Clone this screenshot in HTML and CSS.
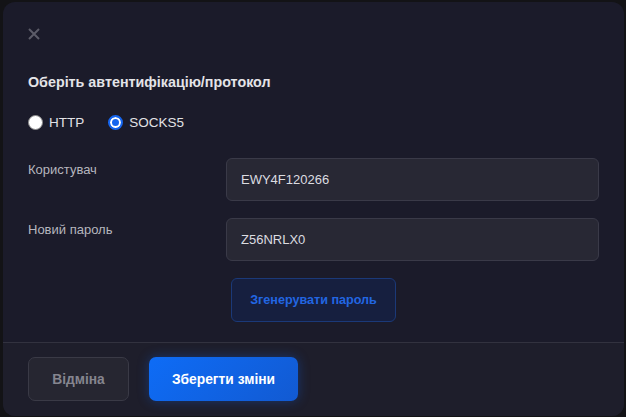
FILE: index.html
```html
<!DOCTYPE html>
<html lang="uk">
<head>
<meta charset="utf-8">
<title>Проксі</title>
<link rel="stylesheet" href="styles.css">
</head>
<body>
<div class="modal">
  <div class="body">
    <button class="close" aria-label="Закрити">
      <svg width="12" height="12" viewBox="0 0 12 12"><path d="M1 1 L11 11 M11 1 L1 11" stroke="#5c5c68" stroke-width="2" stroke-linecap="butt"/></svg>
    </button>
    <h2 class="title">Оберіть автентифікацію/протокол</h2>
    <div class="radios">
      <label class="radio"><input type="radio" name="proto"> <span>HTTP</span></label>
      <label class="radio"><input type="radio" name="proto" checked> <span>SOCKS5</span></label>
    </div>
    <div class="form">
      <div class="label">Користувач</div>
      <input class="field" type="text" value="EWY4F120266">
      <div class="label">Новий пароль</div>
      <input class="field" type="text" value="Z56NRLX0">
      <div></div>
      <div><button class="gen">Згенерувати пароль</button></div>
    </div>
  </div>
  <div class="footer">
    <button class="cancel">Відміна</button>
    <button class="save">Зберегти зміни</button>
  </div>
</div>
</body>
</html>
```
FILE: styles.css
```css
* { box-sizing: border-box; }
html, body { margin: 0; padding: 0; }
body {
  background: #131316;
  font-family: "Liberation Sans", Arial, sans-serif;
  width: 626px;
  height: 417px;
  overflow: hidden;
}
.modal {
  margin: 2px 2px 1px 3px;
  height: 414px;
  background: #1b1b2a;
  border-radius: 12px;
  display: flex;
  flex-direction: column;
  overflow: hidden;
}
.body {
  flex: 1;
  padding: 26px 25px 0 25px;
}
.close {
  display: block;
  background: none;
  border: 0;
  padding: 0;
  width: 12px;
  height: 12px;
  cursor: pointer;
}
.close svg { display: block; }
.title {
  margin: 34px 0 0 0;
  font-size: 14.3px;
  line-height: 16px;
  font-weight: bold;
  color: #e4e4e8;
}
.radios {
  display: flex;
  gap: 24px;
  margin-top: 24px;
  height: 16px;
  align-items: center;
}
.radio {
  display: flex;
  align-items: center;
  gap: 6px;
  font-size: 13.5px;
  color: #e2e2e6;
}
.radio input {
  appearance: none;
  -webkit-appearance: none;
  margin: 0;
  width: 15px;
  height: 15px;
  border-radius: 50%;
  background: #fff;
  border: 1px solid #8a8a8a;
}
.radio input:checked {
  border: 2px solid #1565ee;
  background: #1565ee;
  box-shadow: inset 0 0 0 2px #fff;
}
.form {
  margin-top: 28px;
  display: grid;
  grid-template-columns: 198px 373px;
  row-gap: 17px;
}
.label {
  font-size: 13px;
  line-height: 16px;
  color: #b6b6be;
  padding-top: 4px;
}
.field {
  height: 43px;
  width: 373px;
  background: #282834;
  border: 1px solid #3a3a48;
  border-radius: 6px;
  padding: 0 14px;
  font-family: inherit;
  font-size: 13px;
  color: #dcdce0;
  outline: none;
}
.gen {
  margin-left: 5px;
  width: 165px;
  height: 44px;
  background: #161f3f;
  border: 1px solid #1b3978;
  border-radius: 6px;
  color: #2266e2;
  font-family: inherit;
  font-weight: bold;
  font-size: 12.6px;
}
.footer {
  background: #1e1e2b;
  border-top: 1px solid #32323f;
  height: 74px;
  padding: 14px 25px 0 25px;
  display: flex;
  gap: 20px;
  align-items: flex-start;
}
.cancel {
  width: 101px;
  height: 44px;
  background: #262631;
  border: 1px solid #3a3a46;
  border-radius: 7px;
  color: #85858f;
  font-family: inherit;
  font-weight: bold;
  font-size: 13.8px;
}
.save {
  width: 149px;
  height: 44px;
  background: linear-gradient(135deg, #0e6cf6, #125ad2);
  border: 0;
  border-radius: 7px;
  color: #fff;
  font-family: inherit;
  font-weight: bold;
  font-size: 13.8px;
  box-shadow: 0 0 12px rgba(16, 100, 240, 0.35);
}
```
